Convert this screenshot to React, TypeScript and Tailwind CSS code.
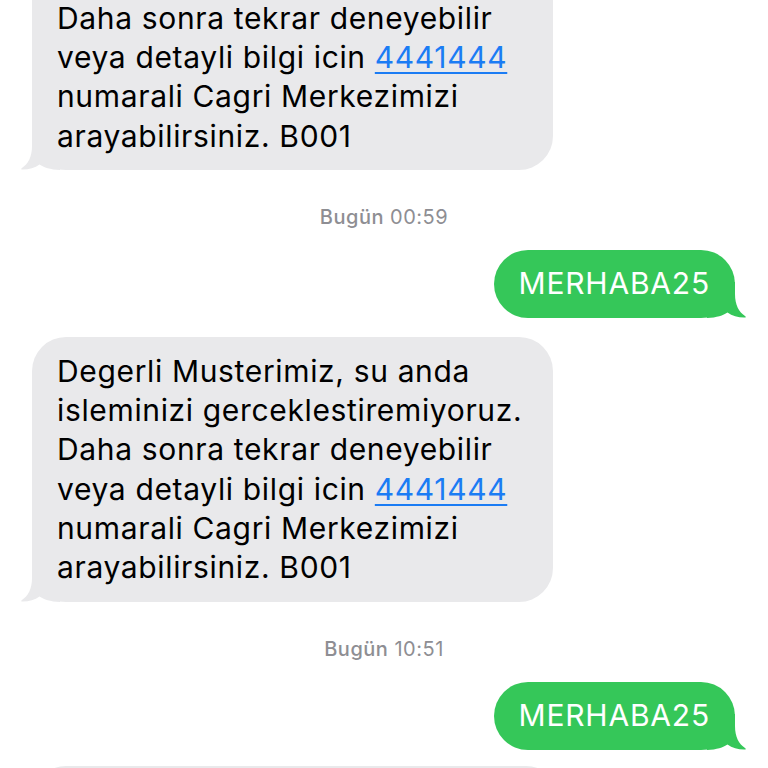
const Link = ({ children }: { children: string }) => (
  <span className="text-[#1b7cf4] underline decoration-[2px] underline-offset-[4px]">{children}</span>
);

// iOS style bubble tails, drawn over the rounded bottom corner
const LeftTail = () => (
  <svg className="absolute left-[-12px] bottom-0" width="40" height="36" viewBox="0 0 40 36">
    <path
      d="M12 0 L12 12 C12 23 8 30 2 34 C0.5 35 1 35.6 3 35.6 C9 35.6 15 33.8 19.5 30.5 C24 33.5 30 35.6 40 36 L40 0 Z"
      fill="#e9e9eb"
    />
  </svg>
);

const RightTail = () => (
  <svg className="absolute right-[-12px] bottom-0" width="40" height="36" viewBox="0 0 40 36">
    <path
      d="M28 0 L28 12 C28 23 32 30 38 34 C39.5 35 39 35.6 37 35.6 C31 35.6 25 33.8 20.5 30.5 C16 33.5 10 35.6 0 36 L0 0 Z"
      fill="#35c759"
    />
  </svg>
);

const Tail4 = () => (
  <>
    Daha sonra tekrar deneyebilir
    <br />
    veya detayli bilgi icin <Link>4441444</Link>
    <br />
    numarali Cagri Merkezimizi
    <br />
    arayabilirsiniz. B001
  </>
);

const bubble =
  "relative ml-[32px] w-[521px] bg-[#e9e9eb] pl-[25px] pr-[12px] pb-[14px] text-[30px] leading-[39.3px] tracking-[0.65px] text-black";

// first message is scrolled past the top, only its last lines show
const CutIncoming = () => (
  <div className={`${bubble} mt-[-1.4px] rounded-b-[34px]`}>
    <LeftTail />
    <div className="relative">
      <Tail4 />
    </div>
  </div>
);

const Incoming = () => (
  <div className={`${bubble} mt-[19px] rounded-[34px] pt-[15px]`}>
    <LeftTail />
    <div className="relative">
      Degerli Musterimiz, su anda
      <br />
      isleminizi gerceklestiremiyoruz.
      <br />
      <Tail4 />
    </div>
  </div>
);

const Stamp = ({ time }: { time: string }) => (
  <div className="mt-[36px] text-center text-[20px] leading-[22px] tracking-[0.5px] text-[#8e8e93]">
    <span className="font-medium">Bugün</span> {time}
  </div>
);

const Outgoing = ({ text }: { text: string }) => (
  <div className="mt-[22px] flex justify-end pr-[33px]">
    <div className="relative flex h-[68px] items-center rounded-[34px] bg-[#35c759] px-[25px] text-[30px] tracking-[0.8px] text-white">
      <RightTail />
      <span className="relative">{text}</span>
    </div>
  </div>
);

export default function App() {
  return (
    <div className="h-[768px] w-[768px] overflow-hidden bg-white font-['Inter',sans-serif] antialiased">
      <div className="flex flex-col">
        <CutIncoming />
        <Stamp time="00:59" />
        <Outgoing text="MERHABA25" />
        <Incoming />
        <Stamp time="10:51" />
        <Outgoing text="MERHABA25" />
        <div className="ml-[32px] mt-[16px] h-[80px] w-[528px] rounded-[34px] bg-[#e9e9eb]" />
      </div>
    </div>
  );
}
